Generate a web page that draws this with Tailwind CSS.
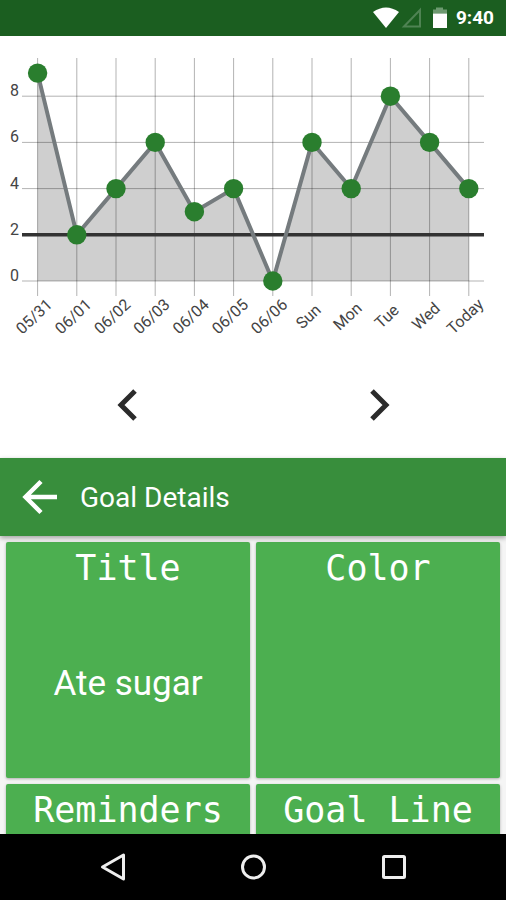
<!DOCTYPE html>
<html lang="en">

<head>
    <meta charset="UTF-8">
    <meta name="viewport" content="width=device-width, initial-scale=1.0">
    <title>Goal Details</title>
    <script src="https://cdn.jsdelivr.net/npm/@tailwindcss/browser@4"></script>
</head>

<body class="flex flex-col h-screen overflow-hidden bg-white font-['Roboto',sans-serif]">
    <!-- status bar -->
    <div class="flex items-center justify-end h-9 shrink-0 bg-[#1b5e20] pr-3 text-white">
        <svg class="w-7 h-6" viewBox="0 0 28 24" fill="#fff">
            <path d="M1 6Q14 -3 27 6L14 22Z" />
        </svg>
        <svg class="w-6 h-6" viewBox="0 0 24 24" fill="none" stroke="#4f8353" stroke-width="2">
            <path d="M4 20.500L20 4V20.500Z" />
        </svg>
        <svg class="w-5 h-6 ml-1.5" viewBox="0 0 20 24">
            <path d="M3 3.500H6V1.500H13V3.500H17V7.500H3Z" fill="#6d9a70" />
            <path d="M3 7.500H17V22H3Z" fill="#fff" />
        </svg>
        <span class="ml-1.5 text-[19px] font-bold">9:40</span>
    </div>

    <!-- chart -->
    <svg class="w-full shrink-0" viewBox="0 36 506 320" id="chart" font-family="Roboto, sans-serif" fill="#444"></svg>

    <div class="flex justify-around shrink-0 h-[102px] items-center">
        <button aria-label="Previous" class="flex items-center justify-center w-16 h-16">
            <svg class="w-10 h-10" viewBox="0 0 40 40" fill="none" stroke="#2b2b2b" stroke-width="5">
                <path d="M28 4L14 18L28 32" />
            </svg>
        </button>
        <button aria-label="Next" class="flex items-center justify-center w-16 h-16">
            <svg class="w-10 h-10" viewBox="0 0 40 40" fill="none" stroke="#2b2b2b" stroke-width="5">
                <path d="M12 4L26 18L12 32" />
            </svg>
        </button>
    </div>

    <!-- toolbar -->
    <div class="relative flex items-center h-[78px] shrink-0 bg-[#388e3c] text-white shadow-[0_2px_5px_rgba(0,0,0,0.35)]">
        <button aria-label="Back" class="ml-5 w-10 h-10">
            <svg class="w-10 h-10" viewBox="0 0 40 40" fill="none" stroke="#fff" stroke-width="4.500">
                <path d="M37 20H6M21 4.500L5.500 20L21 35.500" />
            </svg>
        </button>
        <h1 class="ml-5 pt-0.5 text-[28px]">Goal Details</h1>
    </div>

    <div class="grid grid-cols-2 auto-rows-[236px] gap-1.5 p-1.5 grow min-h-0 overflow-hidden bg-[#f5f5f5] text-white">
        <div class="flex flex-col rounded-xs bg-[#4caf50] shadow-[0_1px_3px_rgba(0,0,0,0.3)]">
            <h2 class="text-center text-[35px] leading-[52px] font-['DejaVu_Sans_Mono',monospace]">Title</h2>
            <p class="flex grow items-center justify-center pb-1 text-[35px]">Ate sugar</p>
        </div>
        <div class="rounded-xs bg-[#4caf50] shadow-[0_1px_3px_rgba(0,0,0,0.3)]">
            <h2 class="text-center text-[35px] leading-[52px] font-['DejaVu_Sans_Mono',monospace]">Color</h2>
        </div>
        <div class="rounded-xs bg-[#4caf50] shadow-[0_1px_3px_rgba(0,0,0,0.3)]">
            <h2 class="text-center text-[35px] leading-[52px] font-['DejaVu_Sans_Mono',monospace]">Reminders</h2>
        </div>
        <div class="rounded-xs bg-[#4caf50] shadow-[0_1px_3px_rgba(0,0,0,0.3)]">
            <h2 class="text-center text-[35px] leading-[52px] font-['DejaVu_Sans_Mono',monospace]">Goal Line</h2>
        </div>
    </div>

    <!-- navigation bar -->
    <div class="relative flex items-center justify-center gap-[100px] h-[66px] shrink-0 bg-black">
        <button aria-label="Back" class="w-10 h-10">
            <svg class="w-10 h-10" viewBox="0 0 40 40" fill="none" stroke="#eee" stroke-width="3" stroke-linejoin="round">
                <path d="M30.500 8V32L9.500 20Z" />
            </svg>
        </button>
        <button aria-label="Home" class="w-10 h-10">
            <svg class="w-10 h-10" viewBox="0 0 40 40" fill="none" stroke="#eee" stroke-width="3">
                <circle cx="20.500" cy="20" r="11" />
            </svg>
        </button>
        <button aria-label="Recent apps" class="w-10 h-10">
            <svg class="w-10 h-10" viewBox="0 0 40 40" fill="none" stroke="#eee" stroke-width="3">
                <rect x="10.500" y="9.500" width="21" height="21" rx="1" />
            </svg>
        </button>
    </div>
</body>
<script>
    var days = ['05/31', '06/01', '06/02', '06/03', '06/04', '06/05', '06/06', 'Sun', 'Mon', 'Tue', 'Wed', 'Today'];
    var counts = [9, 2, 4, 6, 3, 4, 0, 6, 4, 8, 6, 4];
    var goal = 2;

    var px = (i) => 37.6 + i * 39.2;
    var py = (v) => 281 - v * 23.1;
    var line = counts.map((c, i) => `${px(i)},${py(c)}`).join(' ');

    var out = `<polygon points="${px(0)},${py(0)} ${line} ${px(11)},${py(0)}" fill="#cfcfcf"/>`;
    for (var v = 0; v <= 8; v += 2) {
        out += `<line x1="22" x2="484" y1="${py(v)}" y2="${py(v)}" stroke="#000" stroke-opacity="0.3"/>
            <text x="19" y="${py(v)}" font-size="16" text-anchor="end">${v}</text>`;
    }
    days.forEach((d, i) => {
        out += `<line x1="${px(i)}" x2="${px(i)}" y1="58" y2="296" stroke="#000" stroke-opacity="0.3"/>
            <text transform="translate(${px(i) - 4} 316) rotate(-43)" y="6" font-size="16" text-anchor="middle">${d}</text>`;
    });
    out += `<line x1="22" x2="484" y1="${py(goal)}" y2="${py(goal)}" stroke="#333" stroke-width="3.5"/>
        <polyline points="${line}" fill="none" stroke="#757b7e" stroke-width="4"/>`;
    counts.forEach((c, i) => {
        out += `<circle cx="${px(i)}" cy="${py(c)}" r="9.7" fill="#2a7e2e"/>`;
    });
    document.getElementById('chart').innerHTML = out;
</script>

</html>
